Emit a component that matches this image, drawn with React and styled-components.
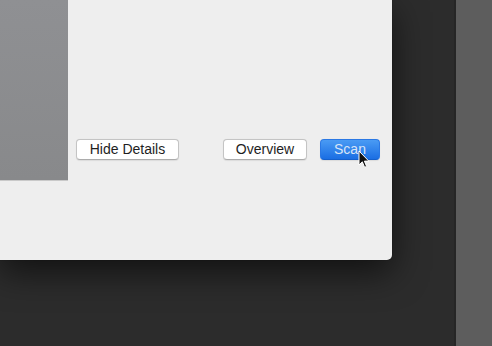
import React from "react";
import styled, { createGlobalStyle } from "styled-components";

const GlobalStyle = createGlobalStyle`
  html, body {
    margin: 0;
    padding: 0;
    background: #2c2c2c;
    overflow: hidden;
  }
  body {
    font-family: "Liberation Sans", Arial, sans-serif;
  }
`;

const Screen = styled.div`
  display: flex;
  width: 492px;
  height: 346px;
  background: #2c2c2c;
`;

const Backdrop = styled.div`
  flex: 1;
  display: flex;
  align-items: flex-start;
`;

const Window = styled.div`
  width: 392px;
  height: 260px;
  background: #eeeeee;
  border-bottom-right-radius: 5px;
  box-shadow: 0 12px 34px rgba(0, 0, 0, 0.6), 0 0 1px rgba(0, 0, 0, 0.6);
  display: flex;
  align-items: flex-start;
  position: relative;
  z-index: 1;
`;

const SidePanel = styled.div`
  width: 68px;
  height: 180px;
  background: linear-gradient(#8f9093, #88898b);
  border-bottom: 1px solid #c9c9c9;
`;

const Controls = styled.div`
  flex: 1;
  display: flex;
  align-items: center;
  padding: 139px 12px 0 8px;
`;

const Spacer = styled.div`
  flex: 1;
`;

const Button = styled.button`
  position: relative;
  height: 21px;
  width: ${(p) => p.$w}px;
  margin-left: ${(p) => p.$ml || 0}px;
  padding: 0;
  font-family: "Liberation Sans", Arial, sans-serif;
  font-size: 14px;
  line-height: 19px;
  border-radius: 4px;
  cursor: default;
  color: #1e1e1e;
  background: #ffffff;
  border: 1px solid #c4c4c4;
  border-bottom-color: #acacac;
  box-shadow: 0 0.5px 1px rgba(0, 0, 0, 0.08);

  ${(p) =>
    p.$primary &&
    `
    color: #d6e4f7;
    background: linear-gradient(#4a9bf4, #1a6ee3);
    border: 1px solid #2a78e4;
    border-bottom-color: #1560cc;
  `}
`;

const DarkGap = styled.div`
  width: 63px;
`;

const SideStrip = styled.div`
  width: 37px;
  background: #5d5d5d;
  border-left: 2px solid #262626;
`;

const Cursor = styled.svg`
  position: absolute;
  left: 37px;
  top: 10px;
  width: 12px;
  height: 19px;
`;

const CursorArrow = () => (
  <Cursor viewBox="0 0 12 19">
    <path
      d="M1 1 L1 15 L4.3 11.8 L6.6 17.3 L8.6 16.4 L6.4 11.1 L10.8 11.1 Z"
      fill="#111"
      stroke="#fff"
      strokeWidth="1"
      strokeLinejoin="round"
    />
  </Cursor>
);

export default function App() {
  return (
    <>
      <GlobalStyle />
      <Screen>
        <Backdrop>
          <Window>
            <SidePanel />
            <Controls>
              <Button $w={103}>Hide Details</Button>
              <Spacer />
              <Button $w={84}>Overview</Button>
              <Button $w={60} $ml={13} $primary>
                Scan
                <CursorArrow />
              </Button>
            </Controls>
          </Window>
        </Backdrop>
        <DarkGap />
        <SideStrip />
      </Screen>
    </>
  );
}
